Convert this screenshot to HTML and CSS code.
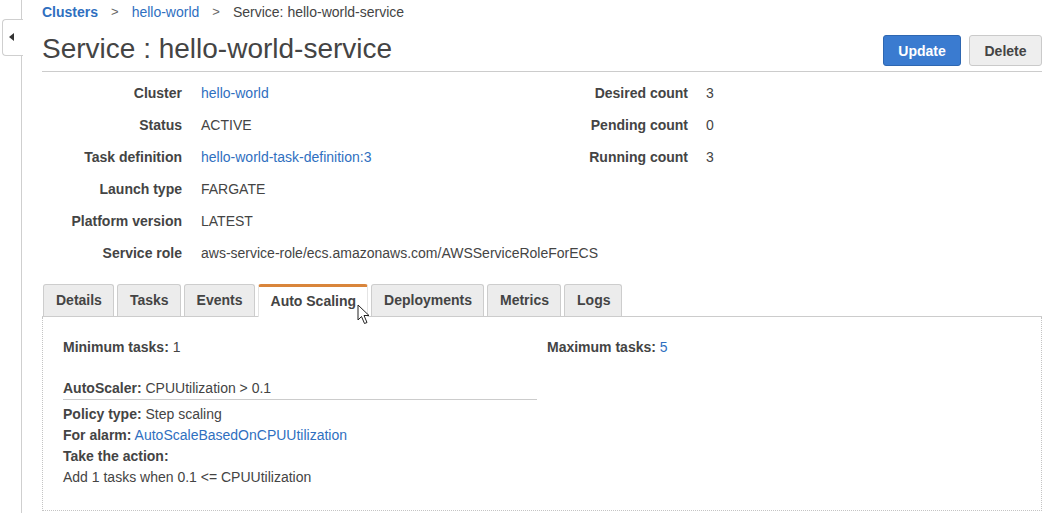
FILE: index.html
```html
<!DOCTYPE html>
<html>
<head>
<meta charset="utf-8">
<link rel="stylesheet" href="styles.css">
</head>
<body>
<div class="app">
  <aside class="sidebar">
    <button class="collapse" aria-label="Collapse">
      <svg width="6" height="8" viewBox="0 0 6 8"><path d="M5 0 L0 4 L5 8 Z" fill="#333"/></svg>
    </button>
  </aside>
  <main class="main">
    <nav class="breadcrumb">
      <a class="crumb strong" href="#">Clusters</a>
      <span class="sep">&gt;</span>
      <a class="crumb" href="#">hello-world</a>
      <span class="sep">&gt;</span>
      <span class="current">Service: hello-world-service</span>
    </nav>
    <header class="header">
      <h1 class="title">Service : hello-world-service</h1>
      <div class="actions">
        <button class="btn btn-primary">Update</button>
        <button class="btn btn-default">Delete</button>
      </div>
    </header>
    <section class="details">
      <dl class="kv kv-left">
        <dt>Cluster</dt><dd><a href="#">hello-world</a></dd>
        <dt>Status</dt><dd>ACTIVE</dd>
        <dt>Task definition</dt><dd><a href="#">hello-world-task-definition:3</a></dd>
        <dt>Launch type</dt><dd>FARGATE</dd>
        <dt>Platform version</dt><dd>LATEST</dd>
        <dt>Service role</dt><dd>aws-service-role/ecs.amazonaws.com/AWSServiceRoleForECS</dd>
      </dl>
      <dl class="kv kv-right">
        <dt>Desired count</dt><dd>3</dd>
        <dt>Pending count</dt><dd>0</dd>
        <dt>Running count</dt><dd>3</dd>
      </dl>
    </section>
    <div class="tabs">
      <div class="tab">Details</div>
      <div class="tab">Tasks</div>
      <div class="tab">Events</div>
      <div class="tab active">Auto Scaling
        <svg class="cursor" width="14" height="21" viewBox="0 0 14 21"><path d="M1 1 L1 16 L4.5 12.5 L7.5 19.5 L10 18.5 L7 11.5 L12 11.5 Z" fill="#fff" stroke="#222" stroke-width="1" stroke-linejoin="miter"/></svg>
      </div>
      <div class="tab">Deployments</div>
      <div class="tab">Metrics</div>
      <div class="tab">Logs</div>
    </div>
    <section class="panel">
      <div class="col col-left">
        <p class="line"><b>Minimum tasks:</b> 1</p>
        <p class="line scaler"><b>AutoScaler:</b> CPUUtilization &gt; 0.1</p>
        <p class="line policy"><b>Policy type:</b> Step scaling</p>
        <p class="line"><b>For alarm:</b> <a href="#">AutoScaleBasedOnCPUUtilization</a></p>
        <p class="line"><b>Take the action:</b></p>
        <p class="line">Add 1 tasks when 0.1 &lt;= CPUUtilization</p>
      </div>
      <div class="col col-right">
        <p class="line"><b>Maximum tasks:</b> <span class="num">5</span></p>
      </div>
    </section>
  </main>
</div>
</body>
</html>
```

FILE: styles.css
```css
* { box-sizing: border-box; }
html, body { margin: 0; padding: 0; background: #fff; }
body {
  font-family: "Liberation Sans", Arial, sans-serif;
  font-size: 14px;
  color: #444;
}
a { color: #2f6fbf; text-decoration: none; }

.app {
  display: flex;
  height: 514px;
  overflow: hidden;
}
.sidebar {
  position: relative;
  width: 22px;
  flex: 0 0 22px;
  border-right: 1px solid #cfcfcf;
  height: 513px;
}
.collapse {
  position: absolute;
  left: 2px;
  top: 19px;
  width: 21px;
  height: 37px;
  padding: 0;
  background: #fff;
  border: 1px solid #cfcfcf;
  border-right: none;
  border-radius: 4px 0 0 4px;
  display: flex;
  align-items: center;
  justify-content: center;
}
.collapse svg { margin-left: -2px; margin-top: -1px; }

.main {
  flex: 1;
  padding: 0 6px 0 20px;
}

.breadcrumb {
  display: flex;
  align-items: center;
  height: 24px;
  line-height: 24px;
  font-size: 14px;
}
.crumb.strong { font-weight: bold; }
.sep { color: #666; margin: 0 13px 0 13px; font-size: 13px; }
.current { color: #444; }

.header {
  display: flex;
  align-items: center;
  justify-content: space-between;
  border-bottom: 1px solid #ccc;
  height: 48px;
}
.title {
  margin: 0;
  font-weight: normal;
  font-size: 28px;
  color: #444;
  line-height: 34px;
  margin-top: 3px;
}
.actions { display: flex; gap: 8px; margin-top: 6px; }
.btn {
  font-family: "Liberation Sans", Arial, sans-serif;
  font-size: 14px;
  font-weight: bold;
  height: 31px;
  border-radius: 3px;
  padding: 0 10px;
}
.btn-primary {
  width: 78px;
  background: #3a7bd0;
  border: 1px solid #2e67b1;
  color: #fff;
}
.btn-default {
  width: 73px;
  background: #eeeeee;
  border: 1px solid #cacaca;
  color: #444;
}

.details {
  display: flex;
  align-items: flex-start;
  margin-top: 5px;
}
.kv {
  display: grid;
  margin: 0;
  line-height: 32px;
  column-gap: 19px;
}
.kv-left { grid-template-columns: 140px 346px; width: 505px; flex: 0 0 505px; }
.kv-right { grid-template-columns: 141px 1fr; column-gap: 18px; }
.kv dt { font-weight: bold; text-align: right; color: #444; }
.kv dd { margin: 0; color: #444; white-space: nowrap; }

.tabs {
  display: flex;
  gap: 3px;
  margin-top: 15px;
  border-bottom: 1px solid #ccc;
  padding-left: 1px;
  height: 33px;
}
.tab {
  position: relative;
  height: 32px;
  line-height: 30px;
  padding: 0 11px 0 12px;
  font-weight: bold;
  color: #444;
  background: #ececec;
  border: 1px solid #cdcdcd;
  border-bottom: none;
  border-radius: 3px 3px 0 0;
}
.tab.active {
  background: #fff;
  border-top: 3px solid #d9853b;
  border-left-color: #e4e4e4;
  border-right-color: #e4e4e4;
  height: 33px;
  line-height: 28px;
}
.cursor {
  position: absolute;
  left: 98px;
  top: 17px;
}

.panel {
  display: flex;
  gap: 10px;
  border: 1px dotted #c4c4c4;
  border-top: none;
  padding: 20px 0 21px 20px;
  height: 194px;
}
.col-left { width: 474px; }
.line {
  margin: 0;
  line-height: 21px;
  font-size: 14px;
}
.line b { color: #444; }
.scaler {
  margin-top: 20px;
  border-bottom: 1px solid #ccc;
}
.policy { margin-top: 4px; }
.num { color: #2f6fbf; }
```
